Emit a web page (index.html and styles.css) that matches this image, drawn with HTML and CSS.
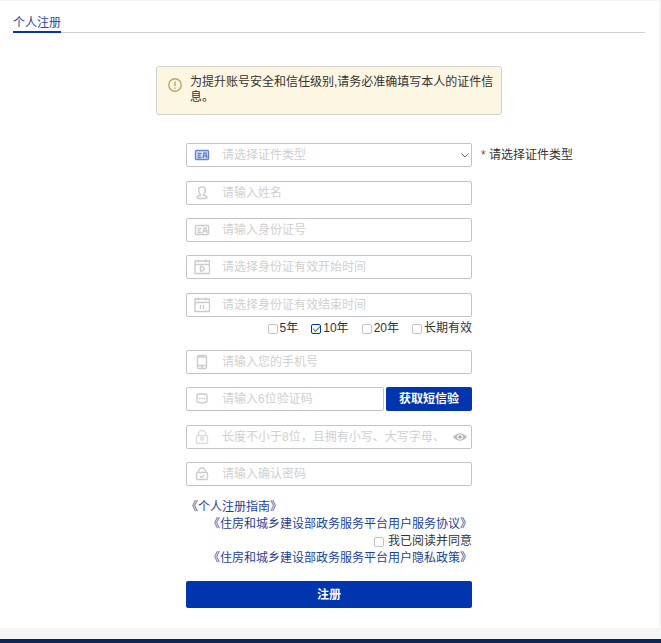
FILE: index.html
```html
<!DOCTYPE html>
<html lang="zh-CN">
<head>
<meta charset="utf-8">
<title>个人注册</title>
<link rel="stylesheet" href="styles.css">
</head>
<body>
<main class="card">
  <header class="tabs"><h1 class="tab">个人注册</h1></header>

  <div class="alert">
    <svg class="alert-icon" viewBox="0 0 14 14" aria-hidden="true"><circle cx="7" cy="7" r="6.2"/><path d="M7 3.5v4.6M7 9.4v1.3"/></svg>
    <p class="alert-text">为提升账号安全和信任级别,请务必准确填写本人的证件信息。</p>
  </div>

  <form class="form">
    <div class="group">
      <div class="field">
        <svg class="icon icon-blue" viewBox="0 0 16 16" aria-hidden="true"><rect class="tint" x="1.5" y="3.5" width="13" height="9" rx="1"/><path d="M3.5 6.5h4M3.5 8.5h3M3.5 10.5h4M9 11l1-5h2l1 5M9.5 9h3"/></svg>
        <select class="control select" aria-label="证件类型"><option>请选择证件类型</option></select>
        <svg class="chevron" viewBox="0 0 10 10" aria-hidden="true"><path d="M1.5 3.5L5 7l3.5-3.5"/></svg>
      </div>
      <p class="note"><span class="star">*</span> 请选择证件类型</p>
    </div>

    <div class="group">
      <div class="field">
        <svg class="icon" viewBox="0 0 16 16" aria-hidden="true"><path d="M6.5 9.500C5 8.500 4.700 6.800 4.700 5.200a3.300 3.300 0 0 1 6.600 0c0 1.600-.3 3.300-1.800 4.300v.8c2 .5 3.500 1 3.500 2.200 0 .8-.6 1-1.500 1h-7c-.9 0-1.500-.2-1.500-1 0-1.200 1.500-1.700 3.500-2.200z"/></svg>
        <input class="control" type="text" aria-label="姓名" placeholder="请输入姓名">
      </div>
      <div class="field">
        <svg class="icon" viewBox="0 0 16 16" aria-hidden="true"><rect x="1.500" y="3.500" width="13" height="9" rx="1"/><path d="M3.500 6.500h4M3.500 8.500h3M3.500 10.500h4M9 11l1-5h2l1 5M9.500 9h3"/></svg>
        <input class="control" type="text" aria-label="身份证号" placeholder="请输入身份证号">
      </div>
      <div class="field">
        <svg class="icon" viewBox="0 0 16 16" aria-hidden="true"><path d="M1 2h14.500v12.500H1zM1 5.500h14.500M4.500.5v3M11.500.5v3M6.500 7.500h1.500l2.500 2-2.500 2.500H6.500z"/></svg>
        <input class="control" type="text" aria-label="身份证有效开始时间" placeholder="请选择身份证有效开始时间">
      </div>
    </div>

    <div class="group">
      <div class="field">
        <svg class="icon" viewBox="0 0 16 16" aria-hidden="true"><path d="M1 2h14.500v12.500H1zM1 5.500h14.500M4.500.5v3M11.500.5v3M6.500 8v4M9.500 8v4"/></svg>
        <input class="control" type="text" aria-label="身份证有效结束时间" placeholder="请选择身份证有效结束时间">
      </div>
      <div class="terms">
        <label class="check"><input class="box" type="checkbox">5年</label>
        <label class="check"><input class="box" type="checkbox" checked>10年</label>
        <label class="check"><input class="box" type="checkbox">20年</label>
        <label class="check"><input class="box" type="checkbox">长期有效</label>
      </div>
    </div>

    <div class="group">
      <div class="field">
        <svg class="icon" viewBox="0 0 16 16" aria-hidden="true"><rect x="3.500" y="1.500" width="9" height="13" rx="1.500"/><path d="M3.500 3h9M3.500 11.500h9M7 13h2"/></svg>
        <input class="control" type="tel" aria-label="手机号" placeholder="请输入您的手机号">
      </div>
      <div class="field">
        <svg class="icon" viewBox="0 0 16 16" aria-hidden="true"><path d="M4.500 3h7a1.500 1.500 0 0 1 1.500 1.500v5.500a1.500 1.500 0 0 1-1.500 1.500H9.500L8 12.500l-1.500-1h-2A1.500 1.500 0 0 1 3 10V4.500a1.500 1.500 0 0 1 1.500-1.500zM5 7.500h1.500M7.300 7.500h1.400M9.500 7.500H11"/></svg>
        <input class="control" type="text" aria-label="验证码" placeholder="请输入6位验证码">
        <button class="button" type="button">获取短信验</button>
      </div>
    </div>

    <div class="group">
      <div class="field">
        <svg class="icon icon-light" viewBox="0 0 16 16" aria-hidden="true"><path d="M4.500 6.500V5a3.500 3.500 0 0 1 7 0v1.500"/><rect x="2.500" y="6.500" width="11" height="8" rx="1"/><circle cx="8" cy="9.500" r="1.500"/><path d="M8 11v1.500"/></svg>
        <input class="control password" type="password" aria-label="密码" placeholder="长度不小于8位，且拥有小写、大写字母、数字">
        <button class="eye" type="button" aria-label="显示密码"><svg viewBox="0 0 14 8" aria-hidden="true"><path d="M0 4Q7-3.500 14 4 7 11.500 0 4z" fill="#bbb"/><circle cx="7" cy="4" r="2.800" fill="#fff"/><circle cx="7" cy="4" r="1.700" fill="#aaa"/></svg></button>
      </div>
      <div class="field">
        <svg class="icon" viewBox="0 0 16 16" aria-hidden="true"><path d="M4.500 7V5.500a3.500 3.500 0 0 1 7 0V7"/><rect x="2.500" y="6.500" width="11" height="7" rx="1"/><path d="M6 10l1.500 1.500 2.500-2.500"/></svg>
        <input class="control" type="password" aria-label="确认密码" placeholder="请输入确认密码">
      </div>
    </div>

    <div class="agreement">
      <a class="guide" href="#">《个人注册指南》</a>
      <a href="#">《住房和城乡建设部政务服务平台用户服务协议》</a>
      <label class="check"><input class="box" type="checkbox">我已阅读并同意</label>
      <a href="#">《住房和城乡建设部政务服务平台用户隐私政策》</a>
    </div>
    <button class="button submit" type="submit">注册</button>
  </form>
</main>
<footer class="footer"></footer>
</body>
</html>
```
FILE: styles.css
```css
* { box-sizing: border-box; }

body {
  margin: 0;
  background: #f5f5f5;
  color: #333;
  font: 12px/17px "Liberation Sans", "Noto Sans CJK SC", sans-serif;
}

p, h1 { margin: 0; }
input, select, button { font: inherit; }
a { color: #1f3f97; text-decoration: none; }

.card {
  margin: 1px 2px 0 0;
  padding: 15px 1px 20px 0;
  background: #fff;
}

.tabs {
  display: flex;
  margin: 0 13px;
  border-bottom: 1px solid #cfcfc8;
}

.tab {
  margin-bottom: -1px;
  border-bottom: 2px solid #0035ad;
  color: #2848a5;
  font-size: 12px;
  font-weight: 400;
  line-height: 15px;
}

.alert {
  display: flex;
  gap: 8px;
  max-width: 346px;
  margin: 33px auto 28px;
  padding: 8px 6px 9px 11px;
  border: 1px solid #d2d2cc;
  border-radius: 3px;
  background: #fcf6e2;
}

.alert-icon {
  flex: none;
  width: 14px;
  height: 14px;
  margin-top: 3px;
  fill: none;
  stroke: #b9a766;
  stroke-width: 1.4;
}

.alert-text { line-height: 15px; }

.form {
  display: grid;
  grid-template-columns: 1fr 286px 1fr;
}

.form > * { grid-column: 2; }

.group {
  display: grid;
  grid-template-columns: minmax(0, 1fr);
  gap: 13px;
  margin-bottom: 14px;
}

.group:first-child {
  grid-column: 1 / -1;
  grid-template-columns: 1fr 286px 1fr;
  gap: 0;
}

.group:first-child .field { grid-column: 2; }

.group:has(.terms) { gap: 2px; }

.field {
  position: relative;
  display: flex;
  gap: 2px;
}

.icon {
  position: absolute;
  top: 4px;
  left: 8px;
  width: 16px;
  height: 16px;
  fill: none;
  stroke: #ccc;
  stroke-width: 1.4;
  pointer-events: none;
}

.icon-blue { stroke: #6485d2; }
.icon-light { stroke: #ddd; }
.tint { fill: #dbe5f8; }

.control {
  flex: 1;
  min-width: 0;
  height: 24px;
  padding: 0 8px 0 35px;
  border: 1px solid #c4c4c4;
  border-radius: 2px;
  outline: 0;
  background: transparent;
  color: #333;
}

.control::placeholder { color: #d0d0d0; opacity: 1; }

.select {
  appearance: none;
  color: #d0d0d0;
}

.chevron {
  position: absolute;
  top: 7px;
  right: 2px;
  width: 10px;
  height: 10px;
  fill: none;
  stroke: #777;
  pointer-events: none;
}

.password { padding-right: 27px; }

.eye {
  position: absolute;
  top: 8px;
  right: 5px;
  display: flex;
  width: 14px;
  padding: 0;
  border: 0;
  background: none;
}

.eye svg { width: 14px; height: 8px; }

.note {
  padding-left: 9px;
  line-height: 24px;
}

.star { color: #a33; }

.terms {
  display: flex;
  justify-content: flex-end;
  gap: 13px;
  padding-top: 1px;
  margin-bottom: -1px;
}

.check {
  display: flex;
  align-items: center;
  gap: 2px;
}

.box {
  appearance: none;
  display: grid;
  place-items: center;
  width: 10px;
  height: 10px;
  margin: 0;
  border: 1px solid #c4c4c4;
  border-radius: 2px;
  background: #fff;
}

.box:checked { border-color: #0035ad; }

.box:checked::before {
  content: "";
  width: 6px;
  height: 3px;
  margin-bottom: 2px;
  border: solid #4a70c8;
  border-width: 0 0 1px 1px;
  transform: rotate(-45deg);
}

.button {
  width: 86px;
  padding: 1px 0 0;
  border: 0;
  border-radius: 2px;
  background: #0035ad;
  color: #fff;
  font-weight: 700;
}

.agreement {
  display: flex;
  flex-direction: column;
  align-items: flex-end;
  margin: -1px 0 14px;
}

.agreement .guide { align-self: flex-start; }
.agreement .check { gap: 4px; }

.submit {
  width: 100%;
  height: 27px;
}

.footer {
  height: 4px;
  margin-top: 11px;
  background: #0b2559;
}
```
